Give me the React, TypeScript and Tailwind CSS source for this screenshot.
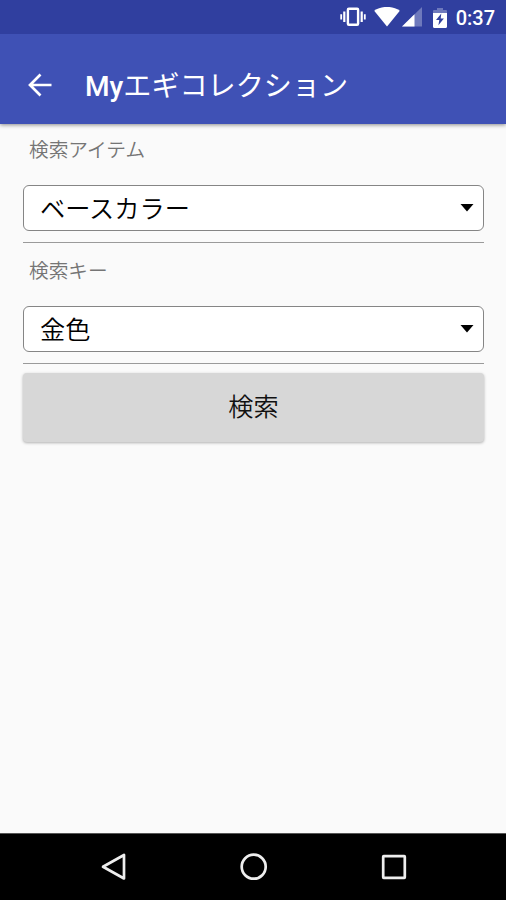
function StatusBar() {
  return (
    <div className="relative z-10 flex h-[34px] items-center justify-end bg-[#303f9f] pr-[11px]">
      {/* Vibrate */}
      <svg width="26" height="20" viewBox="0 0 26 20" fill="none" className="mr-2" aria-hidden="true">
        <rect x="7.9" y="1.7" width="10.2" height="16.1" rx="1" stroke="#fff" strokeWidth="2.4" />
        <path d="M4.3 4.5v10.6M21.7 4.5v10.6" stroke="#fff" strokeWidth="2.2" />
        <path d="M1.2 7.2v5.2M24.8 7.2v5.2" stroke="#fff" strokeWidth="1.8" />
      </svg>
      {/* Wi-Fi */}
      <svg width="26" height="20" viewBox="0 0 26 20" className="mr-[2px]" aria-hidden="true">
        <path d="M13 19.6.2 3.7C3.8 1 8.2-.1 13-.1S22.2 1 25.8 3.7z" fill="#fff" />
      </svg>
      {/* Cell signal */}
      <svg width="20" height="20" viewBox="0 0 20 20" className="mr-[11px]" aria-hidden="true">
        <path d="M0 19.5 20 0v19.5z" fill="#fff" fillOpacity="0.3" />
        <path d="M0 19.5 12.5 7.3v12.2z" fill="#fff" />
      </svg>
      {/* Battery */}
      <svg width="14" height="20" viewBox="0 0 14 20" className="mt-[2px] mr-[9px]" aria-hidden="true">
        <path d="M4 0h6v2h2.8c.7 0 1.2.5 1.2 1.2V5H0V3.2C0 2.5.5 2 1.2 2H4z" fill="#fff" fillOpacity="0.3" />
        <path d="M0 5h14v13.7c0 .7-.5 1.2-1.2 1.2H1.2C.5 19.9 0 19.4 0 18.7z" fill="#fff" />
        <path d="M8.3 5.5 3 12h3.3L5.4 17.3 10.9 10.6H7.7z" fill="#303f9f" />
      </svg>
      <span className="pt-[2px] text-[20px] leading-none font-medium text-white">0:37</span>
    </div>
  );
}

function AppBar() {
  return (
    <header className="relative flex h-[90px] items-center bg-[#3f51b5] pt-3 pl-7 shadow-[0_1px_4px_rgba(0,0,0,0.45)]">
      <svg width="24" height="24" viewBox="0 0 24 24" fill="none" stroke="#fff" strokeWidth="2.7" aria-hidden="true">
        <path d="M23.5 12H3M12.5 1.5 2 12l10.5 10.5" />
      </svg>
      <h1 className="ml-[33px] pt-[5px] text-[28.1px] leading-none font-medium whitespace-nowrap text-white">
        My<span className="font-normal">エギコレクション</span>
      </h1>
    </header>
  );
}

function Spinner({ label, value }: { label: string; value: string }) {
  return (
    <div className="border-b border-[#9a9a9a] pb-[11px]">
      <p className="pt-[15px] pb-5 pl-[6px] text-[19.7px] leading-[28px] font-[350] text-[#757575]">{label}</p>
      <button
        type="button"
        className="flex h-[46px] w-full items-center justify-between rounded-[6px] border border-[#858585] bg-white pr-[9px] pl-4 text-[25.2px] leading-none font-[350] text-black"
      >
        <span className="pt-[3px]">{value}</span>
        <svg width="14" height="8" viewBox="0 0 14 8" aria-hidden="true">
          <path d="M.5 0h13L7 7.500z" fill="#000" />
        </svg>
      </button>
    </div>
  );
}

function NavBar() {
  return (
    <nav className="flex h-[67px] items-center justify-between border-t border-[#555] bg-black pr-[99px] pl-[101px]">
      <svg width="26" height="30" viewBox="0 0 26 30" fill="none" stroke="#eee" strokeWidth="2.7" strokeLinejoin="round" aria-hidden="true">
        <path d="M23 3v23.5L2 14.8z" />
      </svg>
      <svg width="28" height="28" viewBox="0 0 28 28" fill="none" stroke="#eee" strokeWidth="2.7" aria-hidden="true">
        <circle cx="13.7" cy="13.7" r="12" />
      </svg>
      <svg width="26" height="26" viewBox="0 0 26 26" fill="none" stroke="#eee" strokeWidth="2.7" aria-hidden="true">
        <rect x="2.2" y="2.2" width="21.6" height="21.6" rx="0.5" />
      </svg>
    </nav>
  );
}

export default function App() {
  return (
    <div className="flex h-[900px] w-[506px] flex-col overflow-hidden bg-[#fafafa] font-[Roboto,'Noto_Sans_CJK_JP',sans-serif]">
      <StatusBar />
      <AppBar />
      <main className="-mt-[2px] flex-1 pr-[22px] pl-[23px]">
        <Spinner label="検索アイテム" value="ベースカラー" />
        <Spinner label="検索キー" value="金色" />
        <button
          type="button"
          className="mt-[9px] flex h-[69px] w-full items-center justify-center rounded-[4px] bg-[#d7d7d7] text-[25.2px] leading-none font-[350] text-[#111] shadow-[0_1px_3px_rgba(0,0,0,0.3)]"
        >
          検索
        </button>
      </main>
      <NavBar />
    </div>
  );
}
